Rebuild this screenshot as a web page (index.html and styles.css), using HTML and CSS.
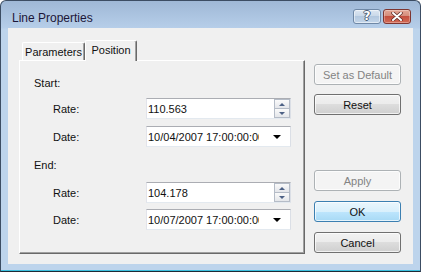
FILE: index.html
```
<!DOCTYPE html>
<html lang="en">
<head>
  <meta charset="UTF-8">
  <title>Line Properties</title>
  <link rel="stylesheet" href="styles.css">
</head>
<body>

  <div class="window">
    <div class="titlebar">
      <span class="title">Line Properties</span>
      <div class="caption-buttons">
        <span class="cap-btn help">?</span>
        <span class="cap-btn close">
          <svg width="14" height="9" viewBox="0 0 14 9">
            <path d="M3 1 L11 8 M11 1 L3 8" stroke="#5a2a26" stroke-width="3.4" stroke-linecap="round"/>
            <path d="M3 1 L11 8 M11 1 L3 8" stroke="#fff" stroke-width="2" stroke-linecap="round"/>
          </svg>
        </span>
      </div>
    </div>

    <div class="client">
      <!-- tab control -->
      <div class="tab-area">
        <div class="tab-strip">
          <div class="tab">Parameters</div>
          <div class="tab active">Position</div>
        </div>
        <div class="tab-panel">
          <div class="group-title">Start:</div>
          <div class="field-row first">
            <label>Rate:</label>
            <div class="spin">
              <span class="value">110.563</span>
              <div class="spin-btns">
                <span class="spin-btn up"></span>
                <span class="spin-btn down"></span>
              </div>
            </div>
          </div>
          <div class="field-row">
            <label>Date:</label>
            <div class="combo">
              <span class="value">10/04/2007 17:00:00:000</span>
              <span class="arrow"></span>
            </div>
          </div>

          <div class="group-title end">End:</div>
          <div class="field-row second">
            <label>Rate:</label>
            <div class="spin">
              <span class="value">104.178</span>
              <div class="spin-btns">
                <span class="spin-btn up"></span>
                <span class="spin-btn down"></span>
              </div>
            </div>
          </div>
          <div class="field-row last">
            <label>Date:</label>
            <div class="combo">
              <span class="value">10/07/2007 17:00:00:000</span>
              <span class="arrow"></span>
            </div>
          </div>
        </div>
      </div>

      <!-- dialog buttons -->
      <div class="side-buttons">
        <button class="btn disabled">Set as Default</button>
        <button class="btn reset">Reset</button>
        <button class="btn disabled apply">Apply</button>
        <button class="btn default ok">OK</button>
        <button class="btn cancel">Cancel</button>
      </div>
    </div>
  </div>

</body>
</html>
```

FILE: styles.css
```
:root {
  --face: #f0f0f0;
  --frame: #bdd4ec;
  --text: #111;
  --shadow: #a0a0a0;
  --dark: #696969;
}
body {
  margin: 0;
  background: #fff;
  font-family: 'Liberation Sans', Arial, sans-serif;
  font-size: 11px;
  color: var(--text);
}
.window {
  width: 421px;
  height: 272px;
  box-sizing: border-box;
  border: 1px solid #3c4d63;
  border-bottom-color: #1f2a36;
  border-radius: 6px 6px 0 0;
  background: linear-gradient(#9fb8d6, #b6cee9 27px, var(--frame) 28px);
  padding: 0 7px 7px;
  box-shadow: inset 0 -1px #3cc0de;
}
.titlebar {
  height: 27px;
  display: flex;
  justify-content: space-between;
}
.title {
  font-size: 12px;
  color: #1c1638;
  padding: 10px 0 0 4px;
}
.caption-buttons {
  display: flex;
  gap: 2px;
  padding-top: 8px;
  margin-right: 2px;
}
.cap-btn {
  height: 15px;
  box-sizing: border-box;
  border-radius: 3px;
  display: flex;
  align-items: center;
  justify-content: center;
}
.help {
  width: 28px;
  border: 1px solid #6f88a6;
  background: linear-gradient(#dde7f2, #c8d7e8 50%, #b3c8df 50%, #c4d6ea);
  box-shadow: inset 0 0 0 1px rgba(255,255,255,0.5);
  font: bold 12px 'DejaVu Sans', sans-serif;
  color: #fff;
  text-shadow: 1px 0 #4b5d75, -1px 0 #4b5d75, 0 1px #4b5d75, 0 -1px #4b5d75;
  line-height: 13px;
}
.close {
  width: 28px;
  border: 1px solid #7e3530;
  background: linear-gradient(#e3a796, #d48a78 50%, #c4503f 50%, #d26a55);
  box-shadow: inset 0 0 0 1px rgba(255,255,255,0.3);
}
.client {
  height: 236px;
  box-sizing: border-box;
  background: var(--face);
  display: flex;
  padding: 11px 0 0 11px;
}
.tab-area {
  width: 286px;
}
.tab-strip {
  height: 21px;
  display: flex;
  align-items: flex-end;
  padding-left: 3px;
}
.tab {
  height: 18px;
  width: 63px;
  box-sizing: border-box;
  border: 1px solid #fff;
  border-right-color: var(--dark);
  border-bottom: none;
  border-radius: 2px 2px 0 0;
  box-shadow: inset -1px 0 var(--shadow);
  text-align: center;
  line-height: 19px;
  white-space: nowrap;
}
.tab.active {
  height: 21px;
  width: 52px;
  line-height: 19px;
  position: relative;
  background: var(--face);
  margin-bottom: -1px;
  z-index: 1;
}
.tab-panel {
  height: 194px;
  box-sizing: border-box;
  border: 1px solid #fff;
  border-right-color: var(--dark);
  border-bottom-color: var(--dark);
  box-shadow: inset -1px -1px var(--shadow);
  padding: 15px 0 0 14px;
}
.group-title {
  height: 14px;
  line-height: 14px;
}
.group-title.end {
  margin-top: 11px;
}
.field-row {
  display: flex;
  align-items: center;
  margin: 7px 0 0 19px;
  height: 21px;
}
.field-row.first {
  margin-top: 8px;
}
.field-row.second {
  margin-top: 10px;
}
.field-row.last {
  margin-top: 6px;
}
label {
  width: 93px;
}
.spin,
.combo {
  width: 145px;
  height: 21px;
  box-sizing: border-box;
  background: #fff;
  border: 1px solid;
  border-color: #abadb3 #dbdfe6 #e3e9ef #e2e3ea;
  display: flex;
  align-items: center;
}
.value {
  padding-left: 1px;
  white-space: nowrap;
  overflow: hidden;
}
.spin .value {
  flex: 1;
}
.spin-btns {
  width: 16px;
  height: 19px;
  display: flex;
  flex-direction: column;
}
.spin-btn {
  flex: 1;
  border: 1px solid #b5bcc7;
  background: linear-gradient(#fafafa, #e4e6ea);
  display: flex;
  align-items: center;
  justify-content: center;
}
.spin-btn.up {
  border-bottom: none;
}
.spin-btn::after {
  content: '';
  border-left: 3px solid transparent;
  border-right: 3px solid transparent;
}
.spin-btn.up::after {
  border-bottom: 3px solid #4d6185;
}
.spin-btn.down::after {
  border-top: 3px solid #4d6185;
}
.combo .value {
  width: 111px;
}
.combo .arrow {
  margin-left: 14px;
  border-left: 4px solid transparent;
  border-right: 4px solid transparent;
  border-top: 4px solid #000;
}
.side-buttons {
  width: 87px;
  margin-left: 9px;
  padding-top: 25px;
  display: flex;
  flex-direction: column;
}
.btn {
  height: 21px;
  box-sizing: border-box;
  padding: 0;
  border: 1px solid #707070;
  border-radius: 3px;
  background: linear-gradient(#f2f2f2, #ebebeb 50%, #dddddd 50%, #cfcfcf);
  box-shadow: inset 0 0 0 1px rgba(255,255,255,0.7);
  font-family: 'Liberation Sans', Arial, sans-serif;
  font-size: 11px;
  color: var(--text);
}
.btn.disabled {
  border-color: #adb2b5;
  background: #f4f4f4;
  color: #838383;
}
.btn.reset {
  margin-top: 9px;
}
.btn.apply {
  margin-top: 55px;
}
.btn.ok,
.btn.cancel {
  margin-top: 10px;
}
.btn.default {
  border-color: #3c7fb1;
  background: linear-gradient(#eaf6fd, #d9f0fc 50%, #bee6fd 50%, #a7d9f5);
}
```
